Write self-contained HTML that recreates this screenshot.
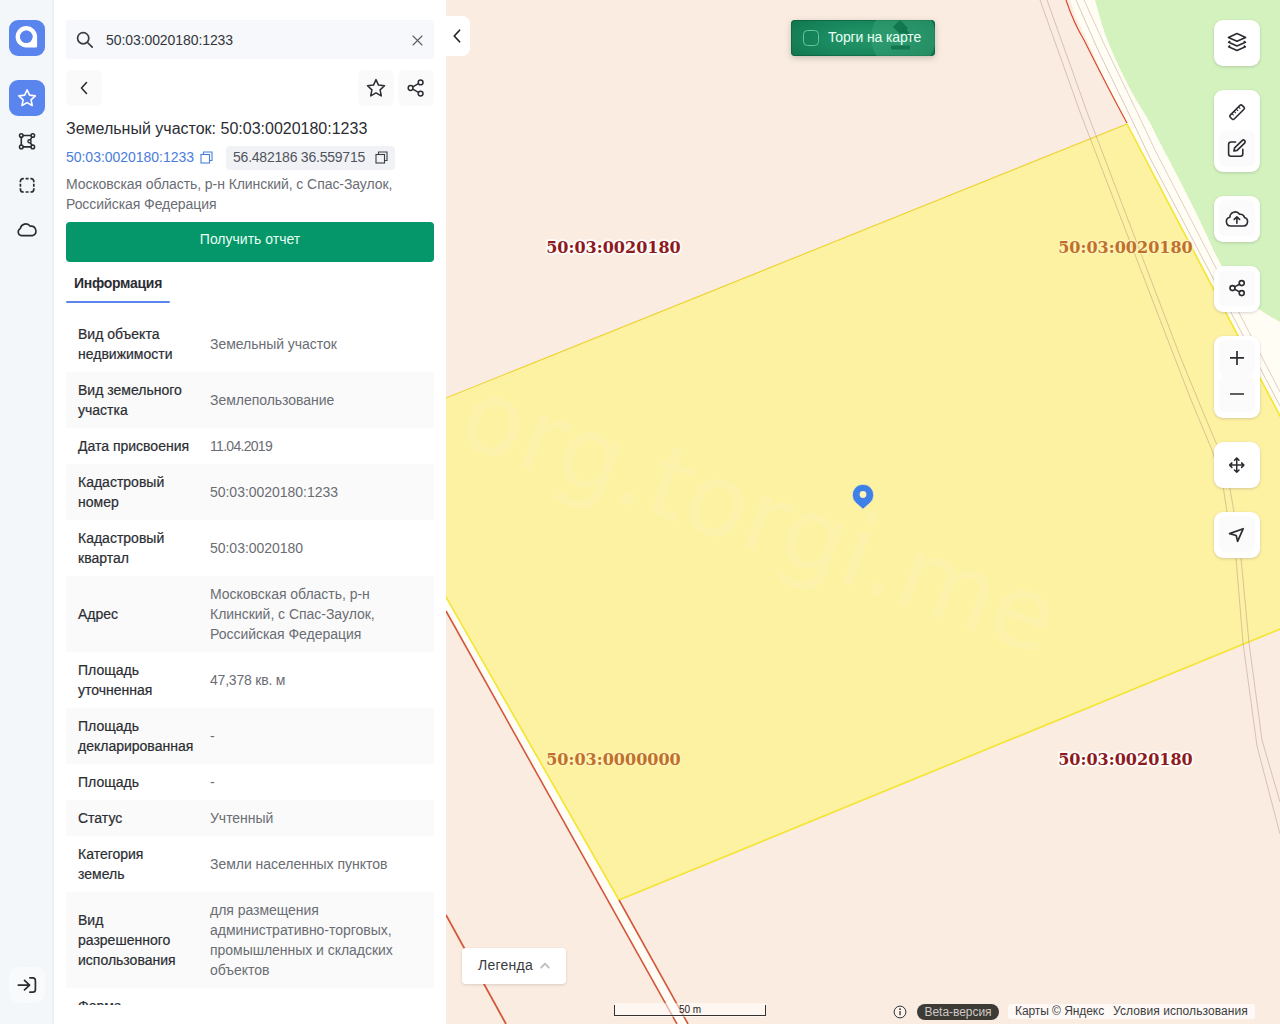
<!DOCTYPE html>
<html lang="ru">
<head>
<meta charset="utf-8">
<title>Земельный участок: 50:03:0020180:1233</title>
<style>
*{box-sizing:border-box;margin:0;padding:0}
html,body{width:1280px;height:1024px;overflow:hidden;background:#fff;font-family:"Liberation Sans",sans-serif;color:#2b2d33}
#app{position:relative;width:1280px;height:1024px;overflow:hidden}
/* ---------- left nav ---------- */
#nav{position:absolute;left:0;top:0;width:52px;height:1024px;background:#f4f7fa}
.nb{position:absolute;left:9px;width:36px;height:36px;border-radius:9px;display:flex;align-items:center;justify-content:center}
.nb svg{display:block}
.nb.blue{background:#5b85ee}
/* ---------- panel ---------- */
#panel{position:absolute;left:52px;top:0;width:394px;height:1024px;background:#fff;border-left:2px solid #edf1f4}
.abs{position:absolute}
#search{left:12px;top:20px;width:368px;height:39px;background:#f6f8fb;border-radius:3px}
#search .q{position:absolute;left:40px;top:0;line-height:40px;font-size:14px;color:#33363c;letter-spacing:-0.08px}
.ib{position:absolute;width:36px;height:36px;background:#fafafa;border-radius:6px;display:flex;align-items:center;justify-content:center}
#title{left:12px;top:118.6px;font-size:16px;line-height:20px;color:#2b2d33;white-space:nowrap}
#cn{left:12px;top:148px;font-size:14px;line-height:18px;color:#4a7ddb;white-space:nowrap;letter-spacing:-0.03px}
#chip{left:172px;top:146px;width:169px;height:24px;background:#f0f2f5;border-radius:4px;font-size:14px;line-height:23px;color:#50545c;padding-left:7px;white-space:nowrap;letter-spacing:-0.22px}
#addr{left:12px;top:174.4px;width:372px;font-size:14px;line-height:20px;color:#6a6d74;letter-spacing:-0.07px;white-space:nowrap}
#btn{left:12px;top:222px;width:368px;height:40px;background:#059669;border-radius:4px;color:#e8fff5;font-size:14px;line-height:35px;text-align:center}
#tab{left:20px;top:274px;font-size:14px;font-weight:bold;line-height:18px;color:#2b2d33;letter-spacing:-0.28px}
#tabline{left:12px;top:301px;width:104px;height:2.4px;background:#5b85ee;border-radius:1px}
#tbl{left:12px;top:316px;width:368px;height:689px;overflow:hidden}
.r{display:flex;align-items:center;width:368px;padding:0 12px}
.r:nth-child(even){background:#fafafa}
.r .l{width:132px;flex:none;font-size:14px;line-height:20px;color:#2b2d33;white-space:nowrap;-webkit-text-stroke:0.2px #2b2d33}
.r .v{flex:1;font-size:14px;line-height:20px;color:#6a6d74;white-space:nowrap;letter-spacing:-0.03px}
.h36{height:36px}.h56{height:56px}.h76{height:76px}.h96{height:96px}
/* ---------- map ---------- */
#map{position:absolute;left:446px;top:0;width:834px;height:1024px;background:#faece1;overflow:hidden}
#map svg.bg{position:absolute;left:0;top:0}
.mb{position:absolute;left:768px;width:46px;background:#fff;border-radius:9px;box-shadow:0 1px 3px rgba(60,60,80,.2)}
.mb .ic{width:44px;height:36px;display:flex;align-items:center;justify-content:center}
</style>
</head>
<body>
<div id="app">

<!-- MAP -->
<div id="map">

<svg class="bg" style="left:-446px" width="1280" height="1024" viewBox="0 0 1280 1024">
  <rect x="446" y="0" width="834" height="1024" fill="#faece1"/>
  <!-- white road + green area (top right) -->
  <path d="M1070 0 L1076 18 L1087 40 L1104 78 L1127 123 L1280 416 L1280 0 Z" fill="#fffdf4"/>
  <path d="M1095 0 C1097.7 8.5 1101.3 24.5 1107.0 39.0 C1112.7 53.5 1122.0 73.3 1129.0 87.0 C1136.0 100.7 1144.1 112.2 1149.0 121.0 C1153.9 129.8 1153.6 130.3 1158.6 140.0 C1163.6 149.7 1172.3 166.0 1179.0 179.0 C1185.7 192.0 1192.1 204.7 1198.6 218.0 C1205.1 231.3 1212.9 249.3 1218.0 259.0 C1223.1 268.7 1225.3 270.8 1229.0 276.0 C1232.7 281.2 1235.0 284.5 1240.0 290.0 C1245.0 295.5 1252.3 303.7 1259.0 309.0 C1265.7 314.3 1273.2 318.0 1280.0 322.0 L1280 0 Z" fill="#d3f2bd"/>
  <!-- white strip bottom-left -->
  <path d="M446 597 L619 900 L688 1024 L677 1024 L446 611 Z" fill="#fffdf6"/>
  <!-- parcel -->
  <path id="parcel" d="M446 398 L1127 124 L1280 416 L1280 629 L619 900 L446 597 Z" fill="#fdf1a2"/>
  <path d="M440 400.4 L1127 124" fill="none" stroke="#ecd42e" stroke-width="1.1"/>
  <path d="M1127 124 L1290 435 M1290 625 L619 900 L440 586.5" fill="none" stroke="#f3e530" stroke-width="1.6" stroke-linejoin="round"/>
  <!-- watermark -->
  <clipPath id="cp"><rect x="446" y="0" width="834" height="1024"/></clipPath>
  <g clip-path="url(#cp)">
  <text transform="translate(455 442) rotate(20)" font-family="DejaVu Sans, sans-serif" font-size="101" fill="#ffffff" fill-opacity="0.11">org.torgi.me</text>
  </g>
  <!-- red boundary lines -->
  <path d="M1066 0 C1072 18 1078 30 1084 40 C1096 64 1110 92 1127 123" fill="none" stroke="#dc4a2c" stroke-width="1.2"/>
  <path d="M446 611 L677 1024" fill="none" stroke="#d4573a" stroke-width="1.6"/>
  <path d="M619 900 L688 1024" fill="none" stroke="#d4573a" stroke-width="1.6"/>
  <path d="M446 915 L506 1024" fill="none" stroke="#d4573a" stroke-width="1.8"/>
  <!-- thin lines -->
  <g fill="none" stroke="#b48f86" stroke-width="0.7" stroke-opacity=".68">
    <path d="M1040 0 L1080 112 L1174 356 L1191 400 L1212 450 L1223.5 489 L1227 512 L1236 558 L1243 643 L1257 746 L1280 834"/>
    <path d="M1047 0 L1087 112 L1180 356 L1198 400 L1219 450 L1230 489 L1234 512 L1241 558 L1249 643 L1262 740 L1280 802"/>
    <path d="M1076 0 L1098 50 L1131 118 L1150 158 L1280 406"/>
    <path d="M1084 0 L1105 46 L1137 112 L1156 152 L1280 392" stroke-opacity=".6"/>
  </g>
  <!-- labels -->
  <g font-family="DejaVu Serif, serif" font-weight="bold" font-size="16.05" text-anchor="middle" stroke-linejoin="round">
    <text x="613.5" y="252.7" fill="#8e1b1b" stroke="#ffffff" stroke-width="3.6" stroke-opacity="0.9" paint-order="stroke">50:03:0020180</text>
    <text x="1125.5" y="252.7" fill="#bf702b" stroke="#fff7c0" stroke-width="2.5" stroke-opacity="0.8" paint-order="stroke">50:03:0020180</text>
    <text x="613.5" y="764.7" fill="#bf702b" stroke="#fff7c0" stroke-width="2.5" stroke-opacity="0.8" paint-order="stroke">50:03:0000000</text>
    <text x="1125.5" y="764.7" fill="#8e1b1b" stroke="#ffffff" stroke-width="3.6" stroke-opacity="0.9" paint-order="stroke">50:03:0020180</text>
  </g>
  <!-- pin -->
  <path d="M863 509.2 L855.7 502.8 A10.7 10.7 0 1 1 870.3 502.8 Z" fill="#3f7fe8" stroke="#fdf4b0" stroke-width="0.8" stroke-linejoin="round"/>
  <circle cx="863" cy="494.5" r="3.4" fill="#fdf3b4"/>
</svg>


<!-- collapse handle -->
<div class="abs" style="left:0;top:16px;width:24px;height:40px;background:#fff;border-radius:0 8px 8px 0"><svg class="abs" style="left:5px;top:12px" width="12" height="16" viewBox="0 0 12 16" fill="none" stroke="#1f2126" stroke-width="1.6" stroke-linecap="round" stroke-linejoin="round"><path d="M8.6 2.2 L3.2 8 L8.6 13.8"/></svg></div>

<!-- auctions toggle -->
<div class="abs" id="torgi" style="left:345px;top:20px;width:144px;height:36px;border-radius:4px;overflow:hidden;background:radial-gradient(ellipse 70% 90% at 50% 50%,#23976a 0%,#17835a 60%,#0e7149 100%);box-shadow:0 2px 6px rgba(60,70,50,.28), inset 0 0 0 1px rgba(8,90,55,.55)">
  <div class="abs" style="left:80px;top:-15.5px;width:65px;height:65px;border-radius:50%;background:rgba(64,170,125,.42)"></div>
  <svg class="abs" style="left:94px;top:0" width="36" height="36" viewBox="0 0 36 36"><g fill="#10744d" fill-opacity=".92"><path d="M8 7 L15 0 L23 8 L16 15 Z"/><path d="M15.5 10.5 L19 7 L29 18 L26.5 20.5 Z"/><rect x="6" y="25.5" width="19" height="4" rx="1"/></g></svg>
  <div class="abs" style="left:12px;top:10px;width:16px;height:16px;border:1.3px solid #63c79a;border-radius:4.5px;background:rgba(20,130,88,.55)"></div>
  <div class="abs" style="left:37px;top:0;line-height:35px;font-size:14px;color:#e9fff4;white-space:nowrap;letter-spacing:-0.14px">Торги на карте</div>
</div>

<!-- right tool buttons -->
<div class="mb" style="top:20px;height:46px"></div>
<div class="mb" style="top:90px;height:82px"></div>
<div class="mb" style="top:196px;height:46px"></div>
<div class="mb" style="top:266px;height:46px"></div>
<div class="mb" style="top:336px;height:82px"></div>
<div class="mb" style="top:442px;height:46px"></div>
<div class="mb" style="top:512px;height:46px"></div>

<svg class="abs" style="left:-446px;top:0" width="1280" height="600" viewBox="0 0 1280 600" fill="none" stroke="#2a2c31" stroke-width="1.6" stroke-linecap="round" stroke-linejoin="round">
  <!-- subtle inner squares -->
  <g stroke="none" fill="#fbfbfb">
        <rect x="1219" y="130.5" width="36" height="36" rx="6"/>
    <rect x="1219" y="200.5" width="36" height="36" rx="6"/>
    <rect x="1219" y="270.5" width="36" height="36" rx="6"/>
    <rect x="1219" y="340.5" width="36" height="36" rx="6"/>
    <rect x="1219" y="376.5" width="36" height="36" rx="6"/>
    <rect x="1219" y="516.5" width="36" height="36" rx="6"/>
  </g>
  <!-- layers -->
  <path d="M1237 33.6 L1245.6 37.4 L1237 41.2 L1228.4 37.4 Z"/>
  <path d="M1229.7 41.5 L1228.6 42.3 L1237 46 L1245.4 42.3 L1244.3 41.5"/>
  <path d="M1229.7 46 L1228.6 46.8 L1237 50.5 L1245.4 46.8 L1244.3 46"/>
  <!-- ruler -->
  <g transform="translate(1237.1 112.2) rotate(-45)">
    <rect x="-8.4" y="-2.8" width="16.8" height="5.6" rx="1.5"/>
    <path d="M-4.6 -2.6 v2 M-1.5 -2.6 v2 M1.6 -2.6 v2 M4.7 -2.6 v2" stroke-width="1"/>
  </g>
  <!-- edit -->
  <path d="M1235.6 142 H1231 A2.4 2.4 0 0 0 1228.6 144.4 V153.8 A2.4 2.4 0 0 0 1231 156.2 H1240.4 A2.4 2.4 0 0 0 1242.8 153.8 V149.4"/>
  <path d="M1233.9 151 L1234.6 147.9 L1242.1 140.6 A1.75 1.75 0 0 1 1244.6 143.1 L1237.1 150.4 Z"/>
  <!-- cloud upload -->
  <path d="M1231 226 A4.4 4.4 0 0 1 1229.9 217.3 A5.3 5.3 0 0 1 1239.6 214.3 A4.2 4.2 0 0 1 1244.5 217.6 A4.3 4.3 0 0 1 1243.6 226 Z"/>
  <path d="M1236.9 223.2 V217 M1234.2 219.4 L1236.9 216.8 L1239.6 219.4"/>
  <!-- share -->
  <circle cx="1241.7" cy="283.1" r="2.5"/><circle cx="1232.5" cy="288.1" r="2.5"/><circle cx="1241.7" cy="293.1" r="2.5"/>
  <path d="M1234.7 286.9 L1239.5 284.3 M1234.7 289.3 L1239.5 291.9"/>
  <!-- plus / minus -->
  <path d="M1230 357.9 H1244 M1237 350.9 V364.9 M1230 394 H1244" stroke-width="1.7" stroke-linecap="butt"/>
  <!-- move -->
  <path d="M1229.6 465.1 H1243.9 M1236.75 457.9 V472.3 M1234.5 460.2 L1236.75 457.9 L1239 460.2 M1234.5 470 L1236.75 472.3 L1239 470 M1231.9 462.9 L1229.6 465.1 L1231.9 467.4 M1241.6 462.9 L1243.9 465.1 L1241.6 467.4" stroke-width="1.5"/>
  <!-- locate -->
  <path d="M1243.2 528.7 L1229.6 533.6 L1236.2 535.5 L1237.6 541.4 Z" stroke-width="1.7"/>
</svg>


<!-- legend -->
<div class="abs" style="left:16px;top:948px;width:104px;height:36px;background:#fff;border-radius:4px;box-shadow:0 1px 3px rgba(80,60,50,.18)">
  <div class="abs" style="left:16px;top:0;line-height:35px;font-size:14px;color:#3a3c42;letter-spacing:0.25px">Легенда</div>
  <svg class="abs" style="left:78px;top:14px" width="10" height="7" viewBox="0 0 10 7" fill="none" stroke="#b9bbc0" stroke-width="1.7" stroke-linecap="round" stroke-linejoin="round"><path d="M1.2 5.6 L5 1.6 L8.8 5.6"/></svg>
</div>

<!-- scale bar -->
<div class="abs" style="left:168px;top:1003px;width:152px;height:14px;background:rgba(255,255,255,.55)">
  <div class="abs" style="left:0;top:2px;width:152px;height:11px;border:1px solid #333;border-top:none"></div>
  <div class="abs" style="left:0;top:1px;width:152px;text-align:center;font-size:10px;line-height:12px;color:#222">50 m</div>
</div>

<!-- attribution -->
<svg class="abs" style="left:447px;top:1004.5px" width="14" height="14" viewBox="0 0 14 14"><circle cx="7" cy="7" r="5.9" fill="#fdf3ec" stroke="#333" stroke-width="1"/><rect x="6.4" y="6" width="1.3" height="4.2" fill="#333"/><circle cx="7" cy="4.2" r=".9" fill="#333"/></svg>
<div class="abs" style="left:471px;top:1003.5px;width:82px;height:16.5px;border-radius:8.5px;background:#3e3a36;color:#cdc9c4;font-size:12px;line-height:16px;text-align:center;letter-spacing:-0.04px">Beta-версия</div>
<div class="abs" style="left:562px;top:1004px;width:247px;height:15px;border-radius:3px;background:rgba(255,255,255,.7);color:#3c3c3c;font-size:12px;line-height:15px;white-space:nowrap"><span class="abs" style="left:7px;letter-spacing:-0.07px">Карты © Яндекс</span><span class="abs" style="left:105px;letter-spacing:0.08px">Условия использования</span></div>

</div>

<!-- PANEL -->
<div id="panel">

<div class="abs" id="search">
  <svg class="abs" style="left:9px;top:10px" width="20" height="20" viewBox="0 0 20 20" fill="none" stroke="#3a3d44" stroke-width="1.7" stroke-linecap="round"><circle cx="8.2" cy="8.2" r="5.6"/><path d="M12.5 12.5 L17.2 17.2"/></svg>
  <div class="q">50:03:0020180:1233</div>
  <svg class="abs" style="left:346px;top:15px" width="11" height="11" viewBox="0 0 11 11" fill="none" stroke="#5a5d65" stroke-width="1.1" stroke-linecap="round"><path d="M1 1 L10 10 M10 1 L1 10"/></svg>
</div>
<div class="ib" style="left:12px;top:70px"><svg width="10" height="16" viewBox="0 0 10 16" fill="none" stroke="#2b2d33" stroke-width="1.6" stroke-linecap="round" stroke-linejoin="round"><path d="M7.5 2.5 L2.5 8 L7.5 13.5"/></svg></div>
<div class="ib" style="left:304px;top:70px"><svg width="20" height="20" viewBox="0 0 20 20" fill="none" stroke="#2b2d33" stroke-width="1.5" stroke-linejoin="round"><path d="M10 1.6 L12.5 7.1 L18.5 7.8 L14.1 11.9 L15.3 17.9 L10 14.9 L4.7 17.9 L5.9 11.9 L1.5 7.8 L7.5 7.1 Z"/></svg></div>
<div class="ib" style="left:344px;top:70px"><svg width="20" height="20" viewBox="0 0 20 20" fill="none" stroke="#2b2d33" stroke-width="1.5"><circle cx="14.6" cy="4.4" r="2.4"/><circle cx="4.6" cy="10" r="2.4"/><circle cx="14.6" cy="15.6" r="2.4"/><path d="M6.8 8.8 L12.4 5.6 M6.8 11.2 L12.4 14.4"/></svg></div>

<div class="abs" id="title">Земельный участок: 50:03:0020180:1233</div>
<div class="abs" id="cn">50:03:0020180:1233</div>
<svg class="abs" style="left:146px;top:151px" width="13" height="13" viewBox="0 0 13 13" fill="none" stroke="#4a7ddb" stroke-width="1.1"><path d="M3.5 3.5 V1 H12 V9.5 H9.5"/><rect x="1" y="3.5" width="8.5" height="8.5"/></svg>
<div class="abs" id="chip">56.482186 36.559715</div>
<svg class="abs" style="left:321px;top:151px" width="13" height="13" viewBox="0 0 13 13" fill="none" stroke="#3a3d44" stroke-width="1.1"><path d="M3.5 3.5 V1 H12 V9.5 H9.5"/><rect x="1" y="3.5" width="8.5" height="8.5"/></svg>
<div class="abs" id="addr">Московская область, р-н Клинский, с Спас-Заулок,<br>Российская Федерация</div>
<div class="abs" id="btn">Получить отчет</div>
<div class="abs" id="tab">Информация</div>
<div class="abs" id="tabline"></div>

<div class="abs" id="tbl">
  <div class="r h56"><div class="l">Вид объекта<br>недвижимости</div><div class="v">Земельный участок</div></div>
  <div class="r h56"><div class="l">Вид земельного<br>участка</div><div class="v">Землепользование</div></div>
  <div class="r h36"><div class="l">Дата присвоения</div><div class="v" style="letter-spacing:-0.7px">11.04.2019</div></div>
  <div class="r h56"><div class="l">Кадастровый<br>номер</div><div class="v">50:03:0020180:1233</div></div>
  <div class="r h56"><div class="l">Кадастровый<br>квартал</div><div class="v">50:03:0020180</div></div>
  <div class="r h76"><div class="l">Адрес</div><div class="v">Московская область, р-н<br>Клинский, с Спас-Заулок,<br>Российская Федерация</div></div>
  <div class="r h56"><div class="l">Площадь<br>уточненная</div><div class="v" style="letter-spacing:-0.2px">47,378 кв. м</div></div>
  <div class="r h56"><div class="l">Площадь<br>декларированная</div><div class="v">-</div></div>
  <div class="r h36"><div class="l">Площадь</div><div class="v">-</div></div>
  <div class="r h36"><div class="l">Статус</div><div class="v">Учтенный</div></div>
  <div class="r h56"><div class="l">Категория<br>земель</div><div class="v">Земли населенных пунктов</div></div>
  <div class="r h96"><div class="l">Вид<br>разрешенного<br>использования</div><div class="v">для размещения<br>административно-торговых,<br>промышленных и складских<br>объектов</div></div>
  <div class="r h56"><div class="l">Форма<br>собственности</div><div class="v">-</div></div>
</div>

</div>

<!-- NAV -->
<div id="nav">

<div class="nb blue" style="top:20px"></div>
<div class="nb blue" style="top:80px"></div>
<div class="nb" style="top:967px;background:#f8fafc"></div>
<svg class="abs" style="left:0;top:0" width="52" height="1024" viewBox="0 0 52 1024" fill="none" stroke="#2a2c31" stroke-width="1.7" stroke-linecap="round" stroke-linejoin="round">
  <!-- logo -->
  <path d="M26.3 26.1 a10.7 10.7 0 1 0 0 21.4 h9.6 a1.2 1.2 0 0 0 1.2 -1.2 v-9.5 a10.7 10.7 0 0 0 -10.8 -10.7 z M26.3 30.6 a6.2 6.2 0 1 1 0 12.4 a6.2 6.2 0 0 1 0 -12.4 z" fill="#fff" fill-rule="evenodd" stroke="none"/>
  <circle cx="26.3" cy="36.8" r="6.2" fill="#5b85ee" stroke="none"/>
  <!-- star -->
  <path d="M27.1 89.9 L29.55 95.15 L35.35 95.85 L31.05 99.8 L32.25 105.5 L27.1 102.6 L21.95 105.5 L23.15 99.8 L18.85 95.85 L24.65 95.15 Z" stroke="#fff" stroke-width="1.6"/>
  <!-- polygon tool -->
  <path d="M23.2 135.5 H30.9 M21.3 137.4 V145 M23.2 146.9 H30.9 M32 137.1 L30.3 139.9 M30.3 142.7 L32 145.3" stroke-width="1.6"/>
  <circle cx="21.3" cy="135.5" r="1.8" stroke-width="1.5"/><circle cx="32.8" cy="135.5" r="1.8" stroke-width="1.5"/><circle cx="21.3" cy="146.9" r="1.8" stroke-width="1.5"/><circle cx="32.8" cy="146.9" r="1.8" stroke-width="1.5"/><circle cx="29.5" cy="141.3" r="1.6" stroke-width="1.4"/>
  <!-- dashed square -->
  <path d="M20.4 182.3 V181.4 A2.8 2.8 0 0 1 23.2 178.6 H23.8 M30.4 178.6 H31 A2.8 2.8 0 0 1 33.8 181.4 V182.3 M33.8 188.3 V189.2 A2.8 2.8 0 0 1 31 192 H30.4 M23.8 192 H23.2 A2.8 2.8 0 0 1 20.4 189.2 V188.3 M25.6 178.6 H28.6 M25.6 192 H28.6 M20.4 183.8 V186.8 M33.8 183.8 V186.8" stroke-width="1.7" stroke-linecap="butt"/>
  <!-- cloud -->
  <path d="M21.5 235.6 A3.7 3.7 0 0 1 20.3 228.6 A5.6 5.6 0 0 1 30.3 226.2 A4.9 4.9 0 0 1 32.8 235.6 Z" stroke-width="1.6"/>
  <!-- login -->
  <path d="M18.3 985.1 H29.4 M24.5 980.4 L29.6 985.1 L24.5 989.8 M29.9 977.8 H32.7 A2.7 2.7 0 0 1 35.4 980.5 V989.5 A2.7 2.7 0 0 1 32.7 992.2 H29.9" stroke-width="1.7"/>
</svg>

</div>

</div>
</body>
</html>
